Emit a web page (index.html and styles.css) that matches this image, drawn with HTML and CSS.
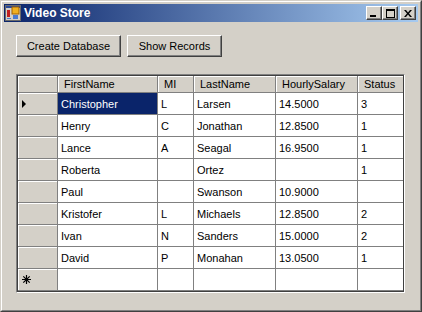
FILE: index.html
```html
<!DOCTYPE html>
<html>
<head>
  <title>Video Store</title>
  <link rel="stylesheet" href="styles.css">
</head>
<body>
  <div class="window">
    <div class="frame">
      <div class="titlebar">
        <svg class="app-icon" width="16" height="16" viewBox="0 0 16 16">
          <rect x="0.5" y="0.5" width="15" height="15" fill="#d4d0c8" stroke="#6a6a6a"/>
          <rect x="1" y="1" width="14" height="2" fill="#2a4a9a"/>
          <rect x="2" y="5" width="3" height="7" fill="#c02020"/>
          <rect x="7" y="2" width="7" height="7" fill="#f0b020" stroke="#a06000" stroke-width="1"/>
          <rect x="8" y="10" width="5" height="4" fill="#4a7ad0"/>
          <rect x="2" y="13" width="4" height="1" fill="#4a7ad0"/>
        </svg>
        <span class="title">Video Store</span>
        <div class="caption-buttons">
          <span class="cap">
            <svg width="8" height="7" viewBox="0 0 8 7"><rect x="0" y="5" width="6" height="2" fill="#000"/></svg>
          </span>
          <span class="cap">
            <svg width="9" height="9" viewBox="0 0 9 9"><rect x="0.5" y="0.5" width="8" height="8" fill="none" stroke="#000"/><rect x="0" y="0" width="9" height="2" fill="#000"/></svg>
          </span>
          <span class="cap cap-close">
            <svg width="8" height="7" viewBox="0 0 8 7"><path d="M0 0h2l2 2.5 2-2.5h2l-3 3.5 3 3.5h-2l-2-2.5-2 2.5h-2l3-3.5z" fill="#000"/></svg>
          </span>
        </div>
      </div>

      <div class="client">
        <div class="toolbar">
          <button class="btn btn-create">Create Database</button>
          <button class="btn btn-show">Show Records</button>
        </div>

        <div class="grid">
          <table>
            <thead>
              <tr>
                <th class="corner"></th>
                <th class="c-first">FirstName</th>
                <th class="c-mi">MI</th>
                <th class="c-last">LastName</th>
                <th class="c-salary">HourlySalary</th>
                <th class="c-status">Status</th>
              </tr>
            </thead>
            <tbody>
              <tr>
                <th class="row-head current"><span class="arrow"></span></th>
                <td class="selected">Christopher</td><td>L</td><td>Larsen</td><td>14.5000</td><td>3</td>
              </tr>
              <tr>
                <th class="row-head"></th>
                <td>Henry</td><td>C</td><td>Jonathan</td><td>12.8500</td><td>1</td>
              </tr>
              <tr>
                <th class="row-head"></th>
                <td>Lance</td><td>A</td><td>Seagal</td><td>16.9500</td><td>1</td>
              </tr>
              <tr>
                <th class="row-head"></th>
                <td>Roberta</td><td></td><td>Ortez</td><td></td><td>1</td>
              </tr>
              <tr>
                <th class="row-head"></th>
                <td>Paul</td><td></td><td>Swanson</td><td>10.9000</td><td></td>
              </tr>
              <tr>
                <th class="row-head"></th>
                <td>Kristofer</td><td>L</td><td>Michaels</td><td>12.8500</td><td>2</td>
              </tr>
              <tr>
                <th class="row-head"></th>
                <td>Ivan</td><td>N</td><td>Sanders</td><td>15.0000</td><td>2</td>
              </tr>
              <tr>
                <th class="row-head"></th>
                <td>David</td><td>P</td><td>Monahan</td><td>13.0500</td><td>1</td>
              </tr>
              <tr class="new-row">
                <th class="row-head">
                  <svg class="star" width="9" height="9" viewBox="0 0 9 9">
                    <path d="M4.5 0v9M0 4.5h9M1.3 1.3l6.4 6.4M7.7 1.3l-6.4 6.4" stroke="#000" stroke-width="1.2"/>
                  </svg>
                </th>
                <td></td><td></td><td></td><td></td><td></td>
              </tr>
            </tbody>
          </table>
        </div>
      </div>
    </div>
  </div>
</body>
</html>
```

FILE: styles.css
```css
/* Classic Windows form look */
body {
  margin: 0;
  font-family: "Liberation Sans", Arial, sans-serif;
  font-size: 11px;
}

.window {
  width: 422px;
  height: 312px;
  box-sizing: border-box;
  border: 1px solid;
  border-color: #d4d0c8 #404040 #404040 #d4d0c8;
  background: #d4d0c8;
}

.frame {
  height: 100%;
  box-sizing: border-box;
  border: 1px solid;
  border-color: #ffffff #808080 #808080 #ffffff;
  padding: 2px;
}

.titlebar {
  height: 18px;
  display: flex;
  align-items: center;
  background: linear-gradient(to right, #0a246a, #a6caf0);
  padding-left: 1px;
}

.app-icon {
  flex: none;
}

.title {
  margin-left: 3px;
  color: #ffffff;
  font-weight: bold;
  font-size: 12px;
  flex: 1;
}

.caption-buttons {
  display: flex;
  align-items: center;
  padding-right: 2px;
}

.cap {
  width: 16px;
  height: 14px;
  box-sizing: border-box;
  display: flex;
  align-items: center;
  justify-content: center;
  background: #d4d0c8;
  border: 1px solid;
  border-color: #ffffff #404040 #404040 #ffffff;
  box-shadow: inset -1px -1px #808080;
}

.cap-close {
  margin-left: 2px;
}

.client {
  padding: 13px 0 0 12px;
}

.toolbar {
  display: flex;
  gap: 6px;
  height: 22px;
}

.btn {
  height: 22px;
  box-sizing: border-box;
  padding: 0;
  font-family: "Liberation Sans", Arial, sans-serif;
  font-size: 11px;
  color: #000000;
  background: #d4d0c8;
  border: 1px solid;
  border-color: #ffffff #404040 #404040 #ffffff;
  box-shadow: inset -1px -1px #808080;
}

.btn-create {
  width: 105px;
}

.btn-show {
  width: 95px;
}

.grid {
  margin-top: 17px;
  width: 389px;
  height: 219px;
  box-sizing: border-box;
  border: 1px solid;
  border-color: #808080 #ffffff #ffffff #808080;
  box-shadow: inset 1px 1px #404040, inset -1px -1px #404040;
  padding: 1px;
  background: #808080;
}

table {
  border-collapse: separate;
  border-spacing: 0;
  table-layout: fixed;
  width: 385px;
  background: #d4d0c8;
}

th, td {
  box-sizing: border-box;
  padding: 0;
  font-weight: normal;
  text-align: left;
  white-space: nowrap;
  overflow: hidden;
}

thead th {
  height: 17px;
  padding-left: 6px;
  background: #d4d0c8;
  border-right: 1px solid #808080;
  border-bottom: 1px solid #808080;
  box-shadow: inset 1px 1px #ffffff;
  color: #000000;
}

th.corner {
  width: 40px;
}

th.c-first {
  width: 100px;
}

th.c-mi {
  width: 36px;
}

th.c-last {
  width: 82px;
}

th.c-salary {
  width: 82px;
}

th.c-status {
  width: 45px;
  border-right: none;
}

td {
  height: 22px;
  padding-left: 3px;
  background: #ffffff;
  border-right: 1px solid #808080;
  border-bottom: 1px solid #808080;
  color: #000000;
}

td:last-child {
  border-right: none;
}

td.selected {
  background: #0a246a;
  color: #ffffff;
}

.row-head {
  height: 22px;
  background: #d4d0c8;
  border-right: 1px solid #808080;
  border-bottom: 1px solid #808080;
  box-shadow: inset 1px 1px #ffffff;
  padding-left: 4px;
}

.arrow {
  display: block;
  width: 0;
  height: 0;
  border-top: 4px solid transparent;
  border-bottom: 4px solid transparent;
  border-left: 4px solid #000000;
}

.star {
  display: block;
}
```
